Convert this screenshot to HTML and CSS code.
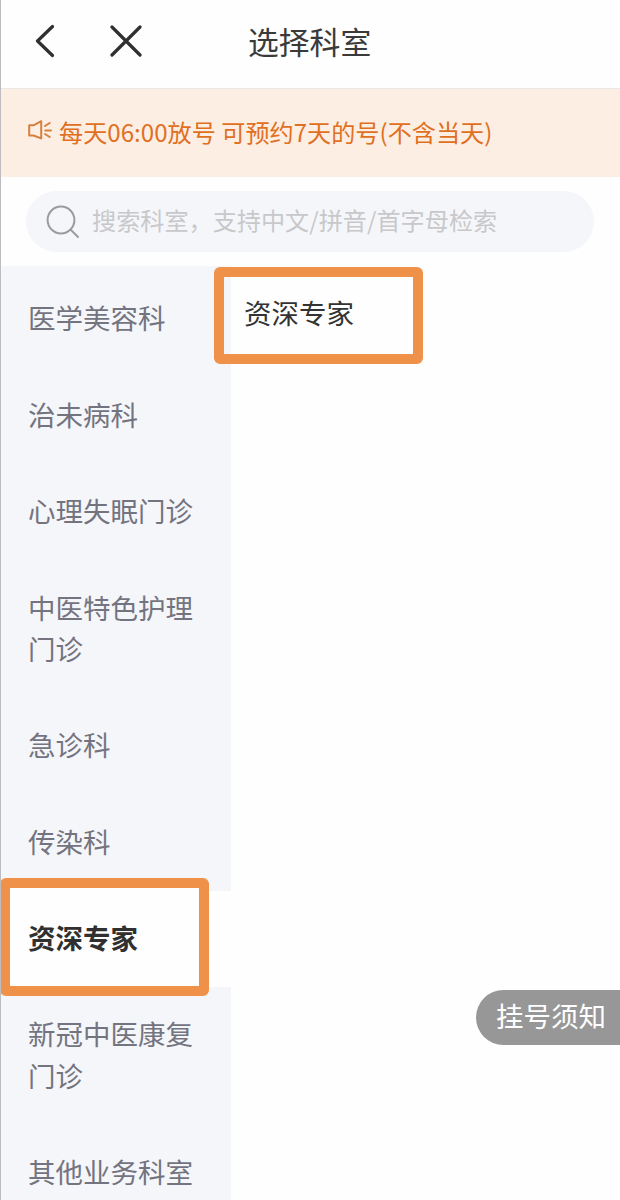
FILE: index.html
```html
<!DOCTYPE html>
<html lang="zh-CN">
<head>
    <meta charset="UTF-8">
    <meta name="viewport" content="width=device-width, initial-scale=1.0">
    <title>选择科室</title>
    <link rel="stylesheet" href="styles.css">
</head>
<body>
    <header class="navbar">
        <svg class="back-icon" width="20" height="34" viewBox="0 0 20 34">
            <path d="M18.5 2.5L3.5 17L18.5 31.5"/>
        </svg>
        <svg class="close-icon" width="32" height="32" viewBox="0 0 32 32">
            <path d="M2 2L30 30M30 2L2 30"/>
        </svg>
        <h1>选择科室</h1>
    </header>
    <div class="notice">
        <svg class="horn-icon" width="24" height="20" viewBox="0 0 24 20">
            <path d="M1.2 5.3H5.5L13.2 1.2V18.4L5.5 15.5H1.2ZM17 6L21.7 3M17.3 10.5H23M17 14L21.7 17"/>
        </svg>
        <span>每天06:00放号 可预约7天的号(不含当天)</span>
    </div>
    <div class="search">
        <svg class="search-icon" width="34" height="34" viewBox="0 0 34 34">
            <circle cx="15" cy="15" r="13.4"/>
            <path d="M24.5 24.5L32 32"/>
        </svg>
        <span>搜索科室，支持中文/拼音/首字母检索</span>
    </div>
    <main class="content">
        <ul class="menu">
            <li>医学美容科</li>
            <li>治未病科</li>
            <li>心理失眠门诊</li>
            <li>中医特色护理门诊</li>
            <li>急诊科</li>
            <li>传染科</li>
            <li class="active">资深专家</li>
            <li>新冠中医康复门诊</li>
            <li>其他业务科室</li>
        </ul>
        <div class="sub-list">
            <div class="sub-item">资深专家</div>
        </div>
    </main>
    <div class="tips-btn">挂号须知</div>
</body>
</html>
```

FILE: styles.css
```css
*, *::after {
    box-sizing: border-box;
}
body {
    position: relative;
    display: flex;
    flex-direction: column;
    height: 1200px;
    margin: 0;
    overflow: hidden;
    border-left: 1px solid #bdbdc1;
    background: #fefefe;
    font-family: "Noto Sans CJK SC", sans-serif;
}
svg {
    flex: none;
    fill: none;
}
.navbar {
    display: flex;
    align-items: center;
    height: 89px;
    padding: 0 0 7px 33px;
    border-bottom: 1px solid #e9e7e7;
}
.navbar svg {
    stroke: #303030;
    stroke-width: 3.2;
    stroke-linecap: round;
    stroke-linejoin: round;
}
.close-icon {
    margin-left: 56px;
}
h1 {
    margin: 1px 0 0 106px;
    font-size: 30.8px;
    font-weight: 400;
    line-height: 40px;
    color: #3a3a3a;
}
.notice {
    display: flex;
    align-items: center;
    height: 88px;
    padding: 0 0 2px 27px;
    background: #fdeee3;
    color: #e0701f;
    font-size: 24.15px;
    line-height: 36px;
}
.horn-icon {
    margin: 0 7px 5px 0;
    stroke: #d5803f;
    stroke-width: 2;
    stroke-linejoin: round;
    stroke-linecap: round;
}
.search {
    display: flex;
    align-items: center;
    width: 568px;
    height: 61px;
    margin: 14px 0 14px 25px;
    padding-left: 20px;
    border-radius: 31px;
    background: #f5f6fa;
    color: #c8c8ca;
    font-size: 24.15px;
    line-height: 36px;
}
.search span {
    padding-bottom: 3px;
}
.search-icon {
    margin-right: 12px;
    stroke: #9b9b9f;
    stroke-width: 2;
    stroke-linecap: round;
}
.content {
    display: flex;
    flex: 1;
    min-height: 0;
    font-size: 27.5px;
    line-height: 41.2px;
}
.menu {
    width: 230px;
    margin: 0;
    padding: 5px 0 0;
    list-style: none;
    background: #f5f6fa;
    color: #73747f;
}
.menu li {
    padding: 26.4px 27px 28.8px;
}
.menu .active {
    position: relative;
    z-index: 0;
    background: #fefefe;
    color: #303030;
    font-weight: 700;
}
/* highlight frames */
.menu .active::after,
.sub-item::after {
    content: "";
    position: absolute;
    border: 10px solid #f0914a;
    border-radius: 6px;
}
.menu .active::after {
    z-index: -1;
    left: -1px;
    top: -13px;
    width: 209px;
    height: 118px;
    background: #fefefe;
}
.sub-list {
    flex: 1;
    padding: 26px 0 0 13px;
}
.sub-item {
    position: relative;
    color: #333;
}
.sub-item::after {
    left: -30px;
    top: -25px;
    width: 209px;
    height: 97px;
}
.tips-btn {
    position: absolute;
    right: 0;
    top: 990px;
    width: 144px;
    height: 55px;
    padding-left: 20px;
    border-radius: 28px 0 0 28px;
    background: #979797;
    color: #fff;
    font-size: 27.5px;
    line-height: 51px;
}
```
